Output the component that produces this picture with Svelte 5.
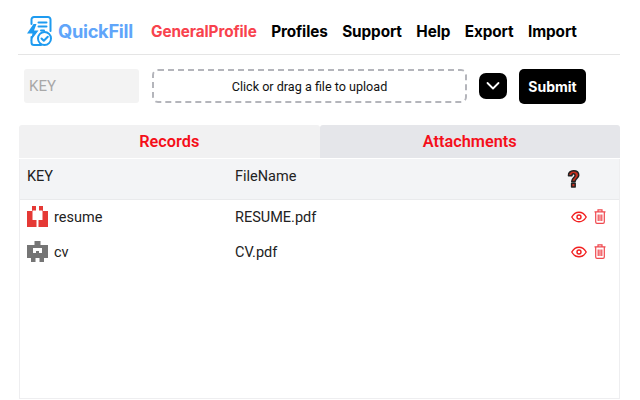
<script>
  const rows = [
    { key: 'resume', file: 'RESUME.pdf', color: '#e53935', kind: 'a' },
    { key: 'cv', file: 'CV.pdf', color: '#757575', kind: 'b' }
  ];
  const nav = ['Profiles', 'Support', 'Help', 'Export', 'Import'];
</script>

<div class="page">
  <header class="header">
    <div class="brand">
      <svg class="logo" width="26" height="30" viewBox="0 0 26 30" fill="none" stroke="#1e9bf0" stroke-width="2" stroke-linecap="round" stroke-linejoin="round">
        <path d="M5.500 8V3.500a2.500 2.500 0 0 1 2.500-2.500H22a2.500 2.500 0 0 1 2.500 2.500V15" />
        <path d="M12.500 6.500h8M12.500 10.500h8M15 14.500h3" />
        <path d="M5.500 21v5.500a2.500 2.500 0 0 0 2.500 2.500h7" />
        <path d="M7.500 8L1 17.500h5.500L4.500 25l8-10.500H8L10.500 8z" fill="#1e9bf0" stroke="none" />
        <circle cx="18.500" cy="22.500" r="6.500" fill="#fff" />
        <path d="M15.500 22.500l2.300 2.300 4-4" />
      </svg>
      <span class="brand-name">QuickFill</span>
    </div>
    <nav class="nav">
      <span class="nav-item active">GeneralProfile</span>
      {#each nav as item}
        <span class="nav-item">{item}</span>
      {/each}
    </nav>
  </header>

  <section class="form">
    <input class="key" placeholder="KEY" />
    <div class="drop">Click or drag a file to upload</div>
    <button class="chev" aria-label="More">
      <svg width="16" height="10" viewBox="0 0 16 10" fill="none" stroke="#fff" stroke-width="1.800" stroke-linecap="round" stroke-linejoin="round"><path d="M2.500 2L8 7.500 13.500 2" /></svg>
    </button>
    <button class="submit">Submit</button>
  </section>

  <div class="tabs">
    <div class="tab first">Records</div>
    <div class="tab second">Attachments</div>
  </div>

  <div class="table">
    <div class="row head">
      <div class="c1 hcell">KEY</div>
      <div class="c2 hcell">FileName</div>
      <div class="c3">
        <svg class="q" width="15" height="21" viewBox="0 0 14 20"><path d="M2.200 6.500C2 3.500 4 1.700 7 1.700s5 1.800 5 4.300c0 2.500-3.300 3-3.500 6H5.300C5.300 8.700 8.500 8 8.500 6.200 8.500 5 7.800 4.600 7 4.600c-1 0-1.500.8-1.500 1.900zM5.200 13.500h3.400v3.700H5.200z" fill="#c62f1e" stroke="#222" stroke-width="1.400" stroke-linejoin="round" /></svg>
      </div>
    </div>
    {#each rows as r}
      <div class="row body">
        <div class="c1 keycell">
          <svg width="21" height="21" viewBox="0 0 21 21" fill={r.color}>
            {#if r.kind === 'a'}
              <path d="M5 0h4v4.500H5.500V14h4v7H0V5h5zM16 0h-4v4.500h3.500V14h-4v7H21V5h-5z" />
            {:else}
              <path fill-rule="evenodd" d="M7.500 0h6v4H21v13h-4v4h-4.500v-4h-4v4H4v-4H0V4h7.500zM6 7v5h3v-2h3v2h3V7z" />
            {/if}
          </svg>
          <span class="txt">{r.key}</span>
        </div>
        <div class="c2 txt">{r.file}</div>
        <div class="c3 actions">
          <svg width="16" height="12" viewBox="0 0 16 12" fill="none" stroke="#f21f1f" stroke-width="1.400"><path d="M.8 6C2.500 3 5 1.200 8 1.200S13.500 3 15.200 6C13.500 9 11 10.800 8 10.800S2.500 9 .8 6z" /><circle cx="8" cy="6" r="2" /></svg>
          <svg width="12" height="15" viewBox="0 0 12 15" fill="none" stroke="#f0484e" stroke-width="1.200"><path d="M.5 2.800h11M4 2.500V.8h4v1.700M1.700 3v10a1.300 1.300 0 0 0 1.300 1.300h6a1.300 1.300 0 0 0 1.300-1.300V3M4.200 5.500v6.500M6 5.500v6.500M7.800 5.500v6.500" /></svg>
        </div>
      </div>
    {/each}
  </div>
</div>

<style>
  :global(body) { margin: 0; background: #fff; }
  .page { width: 640px; height: 400px; box-sizing: border-box; padding: 0 20px 0 18px; overflow: hidden; font-family: Roboto, sans-serif; color: #222; }
  .header { display: flex; align-items: center; height: 46px; border-bottom: 1px solid #e5e5e5; padding: 8px 0 0 8px; }
  .brand { display: flex; align-items: center; gap: 6px; width: 125px; flex: none; }
  .logo { flex: none; }
  .brand-name { font: 700 18.300px Inter, sans-serif; color: #60a5fa; letter-spacing: -0.3px; }
  .nav { display: flex; gap: 14.500px; }
  .nav-item { font: 700 15.300px Inter, sans-serif; color: #000; letter-spacing: -0.1px; }
  .active { color: #f8424d; }
  .form { display: flex; align-items: center; height: 34px; margin: 14px 0 22px 6px; }
  .key { width: 115px; height: 34px; box-sizing: border-box; border: none; background: #f3f3f3; border-radius: 3px; padding: 0 5px; font: 400 15px Roboto, sans-serif; }
  .key::placeholder { color: #a8a8a8; }
  .drop { width: 315px; height: 34px; box-sizing: border-box; margin-left: 13px; border: 2px dashed #b4b5bb; border-radius: 6px; display: flex; align-items: center; justify-content: center; font-size: 12.600px; color: #111; }
  .chev { width: 28px; height: 26px; margin-left: 12px; background: #000; border: none; border-radius: 7px; padding: 0; display: flex; align-items: center; justify-content: center; }
  .submit { width: 67px; height: 35px; margin-left: 12px; background: #000; color: #fff; border: none; border-radius: 5px; font: 700 14px Inter, sans-serif; padding: 0; }
  .tabs { display: flex; height: 33px; margin-left: 1px; width: 601px; }
  .tab { flex: 1; display: flex; align-items: center; justify-content: center; font: 600 16.300px Roboto, sans-serif; color: #f50f1a; border-radius: 3px 3px 0 0; }
  .first { background: #f1f1f2; }
  .second { background: #e5e6ea; }
  .table { margin: 1px 0 0 1px; width: 601px; height: 240px; box-sizing: border-box; border: 1px solid #eeeef0; border-top: none; }
  .row { display: flex; }
  .head { height: 40px; background: #f3f4f6; border-bottom: 1px solid #e9eaec; }
  .body { height: 35px; box-sizing: border-box; padding-bottom: 2px; align-items: center; font-size: 14.500px; }
  .txt { padding-top: 2px; }
  .c1 { width: 215px; padding-left: 7px; box-sizing: border-box; }
  .c2 { width: 322px; box-sizing: border-box; }
  .c3 { flex: 1; }
  .hcell { font-size: 14.500px; padding-top: 9px; }
  .q { display: block; margin: 10px 0 0 9px; }
  .keycell { display: flex; align-items: center; gap: 6px; }
  .actions { display: flex; align-items: center; gap: 7px; padding-left: 14px; }
</style>
